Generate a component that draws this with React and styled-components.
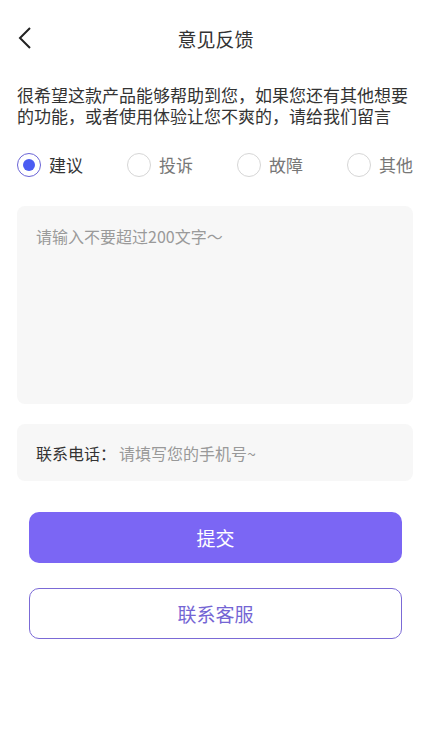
import React, { useState } from "react";
import styled, { createGlobalStyle } from "styled-components";

const Global = createGlobalStyle`
  html, body { margin: 0; padding: 0; background: #fff; }
  body { font-family: "Noto Sans CJK SC", "Noto Sans", sans-serif; color: #333; }
  * { box-sizing: border-box; }
`;

const Page = styled.div`
  width: 431px;
  min-height: 750px;
  background: #fff;
  display: flex;
  flex-direction: column;
`;

const NavBar = styled.div`
  height: 76px;
  display: grid;
  grid-template-columns: 60px 1fr 60px;
  align-items: center;
`;

const BackBtn = styled.div`
  display: flex;
  align-items: center;
  padding-left: 17px;
  height: 100%;
`;

const Title = styled.div`
  text-align: center;
  font-size: 19px;
  color: #333;
  line-height: 1;
`;

const Intro = styled.p`
  margin: 8px 0 0;
  padding: 0 17px;
  font-size: 17px;
  line-height: 21px;
  color: #333;
`;

const RadioRow = styled.div`
  display: flex;
  justify-content: space-between;
  padding: 0 18px 0 17px;
  margin-top: 26px;
`;

const RadioItem = styled.label`
  display: flex;
  align-items: center;
  gap: 8px;
  font-size: 17px;
  color: ${(p) => (p.$checked ? "#333" : "#777")};
  cursor: pointer;
`;

const Circle = styled.span`
  width: 24px;
  height: 24px;
  border-radius: 50%;
  border: 1.5px solid ${(p) => (p.$checked ? "#6a64d6" : "#d6d6d6")};
  display: flex;
  align-items: center;
  justify-content: center;
  &::after {
    content: "";
    width: 12px;
    height: 12px;
    border-radius: 50%;
    background: ${(p) => (p.$checked ? "#4b5cf2" : "transparent")};
  }
`;

const Box = styled.div`
  margin: 0 18px 0 17px;
  background: #f7f7f7;
  border-radius: 8px;
`;

const TextBox = styled(Box)`
  margin-top: 29px;
  height: 198px;
  padding: 19px 19px;
  font-size: 16px;
  color: #9a9a9a;
  line-height: 22px;
`;

const PhoneBox = styled(Box)`
  margin-top: 20px;
  height: 57px;
  display: flex;
  align-items: center;
  padding: 0 19px;
  font-size: 16px;
`;

const PhoneLabel = styled.span`
  color: #333;
`;

const PhoneHint = styled.span`
  color: #999;
  margin-left: 3px;
`;

const Button = styled.div`
  margin: 0 29px;
  height: 51px;
  border-radius: 10px;
  display: flex;
  align-items: center;
  justify-content: center;
  font-size: 19px;
`;

const Submit = styled(Button)`
  margin-top: 31px;
  background: #7b66f4;
  color: #fff;
`;

const Contact = styled(Button)`
  margin-top: 25px;
  border: 1.5px solid #7b6ad6;
  color: #7465d4;
  background: #fff;
`;

const options = ["建议", "投诉", "故障", "其他"];

export default function App() {
  const [sel, setSel] = useState(0);
  return (
    <Page>
      <Global />
      <NavBar>
        <BackBtn>
          <svg width="16" height="24" viewBox="0 0 16 24">
            <path d="M13 2 L3 12 L13 22" fill="none" stroke="#222" strokeWidth="2" />
          </svg>
        </BackBtn>
        <Title>意见反馈</Title>
        <div />
      </NavBar>
      <Intro>很希望这款产品能够帮助到您，如果您还有其他想要的功能，或者使用体验让您不爽的，请给我们留言</Intro>
      <RadioRow>
        {options.map((o, i) => (
          <RadioItem key={o} $checked={sel === i} onClick={() => setSel(i)}>
            <Circle $checked={sel === i} />
            {o}
          </RadioItem>
        ))}
      </RadioRow>
      <TextBox>请输入不要超过200文字～</TextBox>
      <PhoneBox>
        <PhoneLabel>联系电话：</PhoneLabel>
        <PhoneHint>请填写您的手机号~</PhoneHint>
      </PhoneBox>
      <Submit>提交</Submit>
      <Contact>联系客服</Contact>
    </Page>
  );
}
